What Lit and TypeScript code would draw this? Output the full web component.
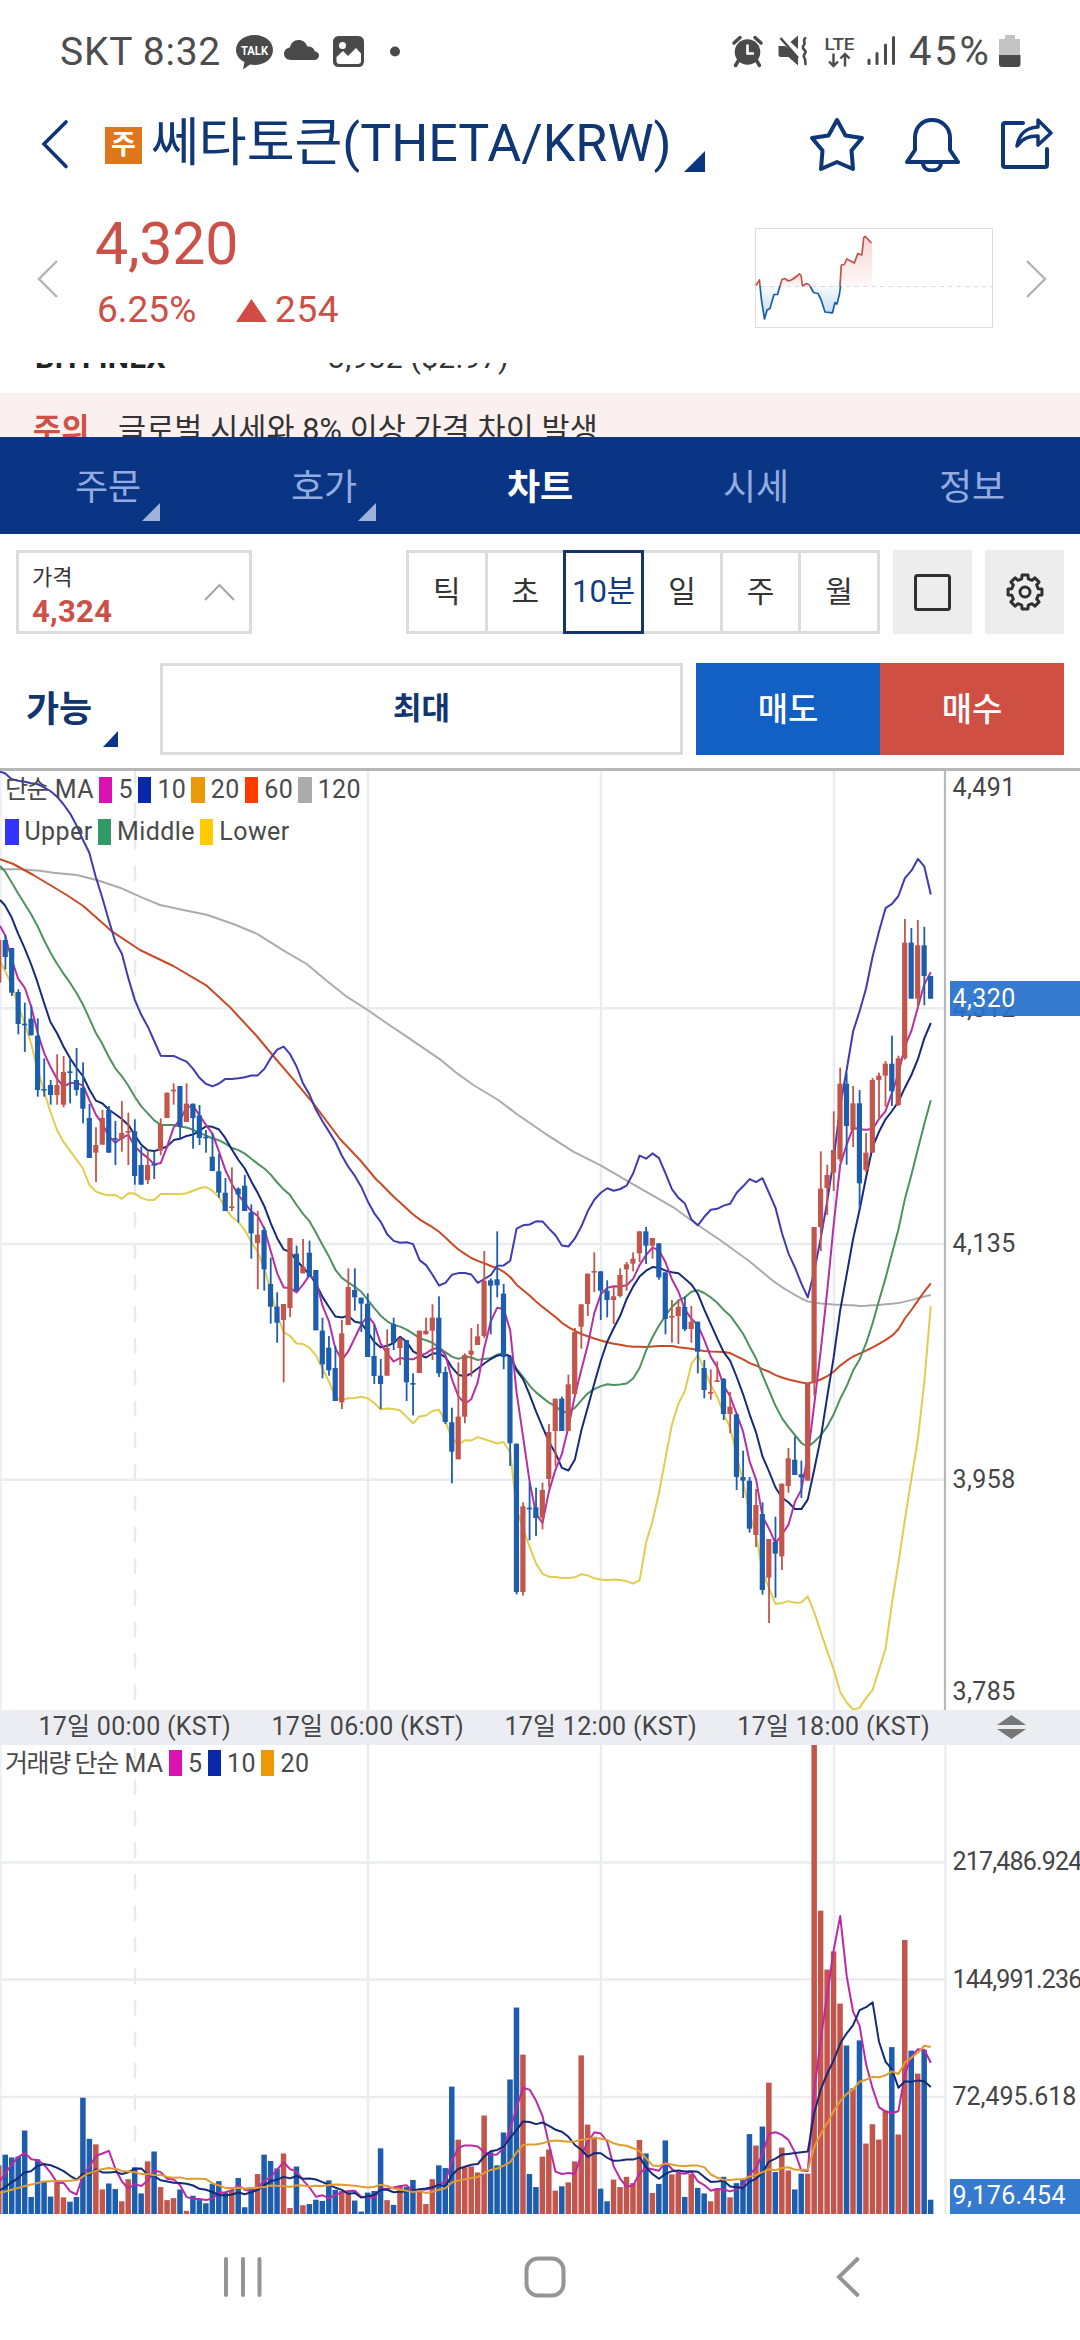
import { LitElement, html, svg, css } from "lit";
import { customElement, property } from "lit/decorators.js";

type Point = [number, number];

/* ---------- candle data: side, body top, body bottom, wick top, wick bottom ---------- */

const UNIT = 3;
const CANDLE_BLOCKS: { offset: number; rows: string }[] = [
  {
    offset: 0,
    rows: `r 540 668 540 668;b 540 591 525 628;b 564 698 564 708;b 696 792 688 823;b 791 796 728 876;b 776 826 737 826;
b 827 990 775 1010;b 987 992 895 1010;b 975 1005 960 1034;r 975 1005 883 1034;r 936 1034 888 1042;b 934 939 895 1030;
b 960 990 864 1007;b 983 1046 907 1090;b 1074 1194 1032 1194;r 1155 1178 1102 1266;r 1074 1154 1050 1154;b 1050 1178 1038 1178;
b 1134 1139 1083 1215;r 1119 1137 1023 1175;r 1113 1118 1058 1215;b 1114 1248 1078 1274;b 1215 1274 1160 1274;r 1215 1260 1172 1272;
b 1212 1217 1175 1257;r 1092 1172 1075 1186;r 998 1074 998 1074;r 989 994 970 1034;b 978 1100 978 1136;r 1031 1086 970 1086;
b 1031 1074 1031 1166;b 1066 1134 1035 1155;b 1130 1135 1110 1178;b 1190 1233 1120 1233;b 1234 1298 1182 1313;b 1298 1353 1254 1353;
r 1339 1344 1222 1353;b 1286 1304 1282 1388;b 1277 1353 1245 1353;b 1357 1420 1333 1496;r 1424 1449 1353 1588;b 1410 1528 1400 1592;
b 1572 1640 1493 1691`,
  },
  {
    offset: 1440,
    rows: `b 200 248 157 308;r 192 240 192 427;r -6 204 -6 231;b 41 152 17 152;r 80 100 -3 100;b 38 110 2 110;
b 90 271 90 271;b 272 373 233 415;b 323 391 288 407;b 384 483 318 483;r 280 487 240 507;r 141 255 85 255;
b 150 172 85 212;b 173 191 173 276;b 191 351 160 351;b 348 408 255 432;b 407 432 357 507;r 324 407 268 407`,
  },
  {
    offset: 1020,
    rows: `b 672 728 653 750;r 716 744 712 795;b 720 847 720 903;b 849 854 820 946;r 692 819 692 819;r 692 703 653 703;
r 653 692 613 780;b 653 820 589 831;b 816 966 800 972;b 967 1055 923 1150;r 950 1078 787 1078;r 765 950 760 970;
r 752 764 684 830;r 709 735 672 735;r 542 708 453 714;b 541 557 535 703;b 538 556 394 592;b 581 771 552 808;
b 771 1030 771 1098;b 1031 1476 1031 1483;r 1219 1476 1207 1487;b 1223 1228 1148 1321;b 1222 1254 1163 1308;r 1170 1253 1148 1288;
r 996 1137 972 1162;r 896 993 896 1098;b 896 993 890 993;r 853 993 824 993;r 696 882 684 882;r 613 680 613 746;
r 521 612 521 648;r 513 518 457 576;b 514 572 514 660;b 572 600 541 652;r 589 600 560 672;r 525 588 505 592;
r 493 508 486 572;r 476 491 457 514;r 394 460 394 486;b 394 437 381 492;r 414 437 414 476;b 430 532 430 539;
b 517 657 517 703;r 648 653 600 728;r 621 648 598 732;b 621 688 589 693;r 665 687 618 728;b 665 755 665 820;
b 804 870 780 895;r 876 881 808 899;r 841 846 784 846`,
  },
  {
    offset: 1440,
    rows: `b 417 522 414 540;r 500 522 456 580;b 523 711 520 750;b 711 722 632 774;b 722 866 711 878;r 795 885 747 921;
b 822 1050 787 1064;r 897 1013 897 1149;b 906 941 830 1073;r 731 949 731 990;r 655 738 624 758;b 659 705 590 705;
b 703 712 662 774;r 429 722 429 722;r -39 430 -39 467`,
  },
  {
    offset: 0,
    rows: `r 1286 1401 1174 1473;r 1245 1284 1214 1365;r 1170 1238 1054 1293;r 971 1198 923 1205;b 971 1098 938 1214;r 1030 1110 978 1161;
b 1030 1270 990 1345;r 1178 1230 1119 1238;r 960 1178 954 1178;r 947 960 938 1077;r 911 947 903 1040;b 911 994 827 1038;
r 895 1035 887 1038;r 548 895 477 899;b 548 716 504 716;r 556 716 480 746;b 556 648 500 736;b 648 716 648 716`,
  },
];

interface Candle {
  up: boolean;
  top: number;
  bottom: number;
  high: number;
  low: number;
}

/* Panel coordinates start at the chart's top rule. */
const PANEL_SHIFT = 11;
const py = (u: number) => u / UNIT - PANEL_SHIFT;

const CANDLES: Candle[] = CANDLE_BLOCKS.flatMap(({ offset, rows }) =>
  rows.split(";").map((row) => {
    const [side, ...v] = row.trim().split(/\s+/);
    const [top, bottom, high, low] = v.map((n) => py(Number(n) + offset));
    return { up: side === "r", top, bottom, high, low };
  })
);

/* ---------- volume data: side + bar top ---------- */

const VOLUMES = `r1125 b1098 b1105 b1103 b1037 b1205 b1110 b1165 b1204 r1162 r1206 b1217 b1205 b954 b1058 r1072 r1186 b1171 b1185 r1216
r1160 b1130 b1196 r1115 b1090 r1180 r1213 r1208 b1186 r1240 b1202 b1213 b1221 b1172 b1165 b1195 r1187 b1157 b1231 b1185
r1147 b1098 b1114 b1133 r1095 r1233 b1128 r1226 b1223 b1212 b1215 b1163 b1187 r1190 r1193 b1214 b1242 b1194 b1190 b1082
r1213 b1225 r1177 b1180 b1162 r1190 r1223 r1160 b1125 b1132 b926 r1060 r1130 r1128 r1143 r999 b1092 b1125 b1042 b908
b726 r845 b1147 b1180 r1103 r1085 r1189 b1178 r1168 r1115 r847 r1022 r1055 b1184 b1216 r1161 r1180 r1154 r1170 r1061
b1095 r1195 b1172 b1062 r1148 r1145 b1205 r1147 b1182 b1196 r1216 r1183 b1154 r1206 b1170 b1162 b1046 r1075 b1027 r916
b1142 r1080 r1138 b1186 b1146 r1146 r62 r481 r630 r584 r716 b822 r930 b809 r1070 r1021 r1060 r986 b826 r1047
r555 b835 r893 b833 b1212`
  .split(/\s+/)
  .map((s) => ({ up: s[0] === "r", y: (Number(s.slice(1)) - 62) / 2.529 }));

const STEP = 6.4713;
const xAt = (slot: number) => 5.4 + STEP * (slot - 1);

const closes = CANDLES.map((c) => (c.up ? c.top : c.bottom));

function average(values: number[], n: number): Point[] {
  const out: Point[] = [];
  for (let i = n - 1; i < values.length; i++) {
    let sum = 0;
    for (let k = i - n + 1; k <= i; k++) sum += values[k];
    out.push([xAt(i), sum / n]);
  }
  return out;
}

function band(values: number[], n: number, k: number): Point[] {
  return average(values, n).map(([x, mean], j) => {
    const win = values.slice(j, j + n);
    const sd = Math.sqrt(win.reduce((a, v) => a + (v - mean) ** 2, 0) / n);
    return [x, mean + k * sd] as Point;
  });
}

const priceLead = (pts: Point[]): Point[] => pts.map(([x, y]) => [x / UNIT, py(y)]);
const volLead = (pts: Point[]): Point[] => pts.map(([x, y]) => [x / 2.904, (y - 62) / 2.529]);
const path = (pts: Point[]) => "M" + pts.map(([x, y]) => `${x.toFixed(1)} ${y.toFixed(1)}`).join("L");

const PRICE_LINES: { color: string; pts: Point[] }[] = [
  {
    color: "#ababab",
    pts: [
      ...priceLead([[0, 328], [60, 328], [120, 332], [160, 338], [230, 345], [290, 360], [360, 383], [420, 410], [480, 435],
        [550, 450], [620, 464], [700, 492], [770, 521], [850, 571], [920, 612], [980, 662], [1040, 710], [1103, 750],
        [1160, 790], [1220, 830], [1320, 898], [1365, 935], [1420, 975], [1495, 1020], [1550, 1062], [1630, 1117], [1720, 1175],
        [1803, 1217], [1900, 1273], [2020, 1342], [2093, 1395], [2160, 1440], [2250, 1505]]),
      ...average(closes, 120),
    ],
  },
  {
    color: "#c94a25",
    pts: [
      ...priceLead([[0, 298], [40, 312], [100, 345], [200, 405], [250, 438], [337, 515], [420, 570], [520, 618], [620, 677],
        [690, 742], [770, 828], [820, 888], [880, 958], [940, 1030], [1020, 1137], [1080, 1200], [1130, 1260]]),
      ...average(closes, 60),
    ],
  },
  {
    color: "#e2cd4e",
    pts: [
      ...priceLead([[0, 605], [14, 630], [34, 673], [54, 735], [74, 790], [93, 850], [112, 925], [132, 992], [151, 1055],
        [171, 1110], [190, 1145], [210, 1172], [229, 1198], [248, 1224], [268, 1274], [287, 1294], [306, 1302], [326, 1306], [346, 1305]]),
      ...band(closes, 20, 2),
    ],
  },
  {
    color: "#3f3bb2",
    pts: [
      ...priceLead([[0, 35], [15, 40], [34, 57], [54, 62], [74, 65], [93, 70], [112, 72], [132, 82], [151, 93], [171, 110],
        [190, 132], [210, 160], [229, 195], [248, 238], [268, 278], [287, 350], [306, 410], [326, 480], [346, 545]]),
      ...band(closes, 20, -2),
    ],
  },
  {
    color: "#4f9160",
    pts: [
      ...priceLead([[0, 318], [14, 333], [34, 365], [54, 400], [74, 432], [93, 462], [112, 497], [132, 540], [151, 577],
        [171, 611], [190, 640], [210, 668], [229, 698], [248, 732], [268, 775], [287, 818], [306, 850], [326, 890], [346, 925]]),
      ...average(closes, 20),
    ],
  },
  {
    color: "#152b78",
    pts: [
      ...priceLead([[0, 420], [14, 435], [34, 470], [54, 520], [74, 565], [93, 612], [112, 665], [132, 728], [151, 785]]),
      ...average(closes, 10),
    ],
  },
  {
    color: "#b530a2",
    pts: [...priceLead([[0, 498], [15, 525], [34, 595], [54, 655]]), ...average(closes, 5)],
  },
];

const vols = VOLUMES.map((v) => v.y);
const VOLUME_LINES: { color: string; pts: Point[] }[] = [
  { color: "#bb2aa4", pts: [...volLead([[0, 1165], [15, 1145], [34, 1123], [52, 1105]]), ...average(vols, 5)] },
  {
    color: "#152b78",
    pts: [
      ...volLead([[0, 1188], [15, 1180], [34, 1168], [52, 1158], [70, 1143], [90, 1140], [108, 1127], [127, 1122], [147, 1125]]),
      ...average(vols, 10),
    ],
  },
  {
    color: "#e09c30",
    pts: [
      ...volLead([[0, 1195], [70, 1178], [127, 1166], [200, 1164], [225, 1162], [250, 1148], [285, 1137], [315, 1132], [340, 1135]]),
      ...average(vols, 20),
    ],
  },
];

const RED = "#c2564d";
const BLUE = "#1d5dae";
const FONT = css`"Roboto", "Noto Sans CJK KR", sans-serif`;

@customElement("status-bar")
export class StatusBar extends LitElement {
  static styles = css`
    :host {
      display: flex;
      justify-content: space-between;
      align-items: center;
      height: 102px;
      padding: 0 59px 0 60px;
      box-sizing: border-box;
      font: 400 39px/1 ${FONT};
      color: #4d4d4d;
    }
    .group {
      display: flex;
      align-items: center;
    }
    .clock {
      letter-spacing: 0.75px;
      width: 175px;
      padding-top: 2px;
      white-space: nowrap;
    }
    .pct {
      font-size: 40px;
      letter-spacing: 2.8px;
      width: 89px;
      padding-top: 2px;
    }
    svg {
      display: block;
    }
    .t {
      font: 700 12.5px ${FONT};
    }
    .lte {
      font: 500 17px ${FONT};
    }
  `;

  render() {
    return html`
      <div class="group">
        <span class="clock">SKT 8:32</span>
        <svg width="170" height="40" viewBox="235 31 170 40" fill="#4a4a4a">
          <path d="M254.5 35c10.500 0 18.500 6.500 18.500 15s-8 15-18.500 15c-1.500 0-3-.1-4.400-.4L243 69.500l1.500-7.500c-5.200-2.600-8.500-7-8.500-12C236 41.500 244 35 254.500 35z" />
          <text class="t" x="254.500" y="54.500" text-anchor="middle" fill="#fff" textLength="27" lengthAdjust="spacingAndGlyphs">TALK</text>
          <path d="M291 60c-4 0-7-2.700-7-6.200 0-3.400 2.500-5.800 6-6.300C290.600 43.200 294 40 298.500 40c4.300 0 7.500 2.600 8.800 6.400 4-.2 6.800 1.800 7.400 4.800 2.600.3 4.300 2 4.300 4.300 0 2.700-2 4.500-4.800 4.500z" />
          <rect x="333" y="36" width="31" height="31" rx="5.500" />
          <circle cx="342.500" cy="45.500" r="3.500" fill="#fff" />
          <path d="M336.500 57l6.500-6 5 5 8-8 5 5.500v7.500a3 3 0 0 1-3 3h-18.500a3 3 0 0 1-3-3z" fill="#fff" />
          <circle cx="395" cy="51.500" r="5" />
        </svg>
      </div>
      <div class="group">
        <svg width="178" height="40" viewBox="731 31 178 40" fill="#4a4a4a">
          <circle cx="747.500" cy="52" r="12.800" />
          <path d="M747.500 44.500v9h6.500" fill="none" stroke="#fff" stroke-width="2.600" />
          <path d="M734 43l6-5.500M761 43l-6-5.500M738.500 60.500l-3 5M756.500 60.500l3 5" stroke="#4a4a4a" stroke-width="3.500" stroke-linecap="round" />
          <path d="M778.500 46h6.500l5 3.500L798 58v7.500L788.500 57H781a2.500 2.500 0 0 1-2.500-2.500zM790.500 42l7.500-6.500V49z" />
          <path d="M780.500 38L798 58" stroke="#4a4a4a" stroke-width="2.600" />
          <path d="M806 37.500c-4.500 3 0 5-1.800 7s-1.800 4 .8 6-3 4.500-.8 7 0 5 1.800 7.500" fill="none" stroke="#4a4a4a" stroke-width="2.600" />
          <text class="lte" x="824.500" y="49.500" textLength="30" lengthAdjust="spacingAndGlyphs">LTE</text>
          <path d="M833.500 53.500v12M829 61.500l4.500 4.500 4.500-4.500M845 66.500v-12M840.500 58.500l4.500-4.500 4.500 4.500" fill="none" stroke="#4a4a4a" stroke-width="2.400" />
          <path d="M869 63.500v-3.500M877 63.500v-10M885.500 63.500v-18.500M893.500 63.500v-26" stroke="#4a4a4a" stroke-width="3" stroke-linecap="round" />
        </svg>
        <span class="pct">45%</span>
        <svg width="23" height="32" viewBox="998 35 23 32">
          <path d="M1005 35h10v4h5v16h-21V39h6z" fill="#c3c3c3" />
          <path d="M999 55h21.500v9a3 3 0 0 1-3 3h-15.500a3 3 0 0 1-3-3z" fill="#4a4a4a" />
        </svg>
      </div>
    `;
  }
}

@customElement("coin-header")
export class CoinHeader extends LitElement {
  static styles = css`
    :host {
      display: flex;
      align-items: center;
      height: 84px;
      padding-left: 38px;
      color: #12376f;
      font-family: ${FONT};
    }
    svg {
      display: block;
      flex: none;
    }
    .badge {
      width: 37px;
      height: 37px;
      margin: 2px 9px 0 36px;
      background: #e0761c;
      color: #fff;
      font: 700 27px/36px ${FONT};
      text-align: center;
    }
    .title {
      font-size: 52px;
      line-height: 86px;
      white-space: nowrap;
      width: 521px;
      color: #0f3675;
    }
    .mark {
      margin: 35px 104px 0 12px;
    }
    .bell {
      margin: 0 39px;
    }
  `;

  render() {
    return html`
      <svg width="31" height="52" viewBox="0 0 31 52"><path d="M28 4L6 26l22 22.500" fill="none" stroke="#0f3778" stroke-width="3.600" stroke-linecap="round" /></svg>
      <span class="badge">주</span>
      <span class="title">쎄타토큰(THETA/KRW)</span>
      <svg class="mark" width="21" height="21"><path d="M21 0v21H0z" fill="#0a3484" /></svg>
      <svg width="56" height="56" viewBox="0 0 56 56" fill="none" stroke="#0f3778" stroke-width="4" stroke-linejoin="round">
        <path d="M28 4l8.500 15.500L53 22 42.500 34.500 44 53l-16-7-16 7 1.500-18.500L3 22l16.500-2.500z" />
      </svg>
      <svg class="bell" width="56" height="56" viewBox="0 0 56 56" fill="none" stroke="#0f3778" stroke-width="4" stroke-linejoin="round">
        <path d="M3 46l8-12V22C11 11 18.500 4 28 4s18 7 18 18v12l8 12z" />
        <path d="M19 47c0 10 18 10 18 0" />
      </svg>
      <svg width="56" height="56" viewBox="0 0 56 56" fill="none" stroke="#0f3778" stroke-width="4" stroke-linejoin="round" stroke-linecap="round">
        <path d="M24 7H6a2 2 0 0 0-2 2v40a2 2 0 0 0 2 2h40a2 2 0 0 0 2-2V33" />
        <path d="M18 30c2-12 8-18 21-19V4l13 13-13 12v-9c-9 0-15 2-21 10z" stroke-width="3.500" />
      </svg>
    `;
  }
}

@customElement("price-summary")
export class PriceSummary extends LitElement {
  static styles = css`
    :host {
      display: flex;
      align-items: flex-start;
      height: 177px;
      color: #cb5148;
      font-family: ${FONT};
    }
    svg {
      display: block;
    }
    .prev {
      margin: 74px 0 0 37px;
    }
    .next {
      margin: 74px 0 0 33px;
    }
    .figures {
      flex: 1;
      padding-left: 37px;
    }
    .price {
      font-size: 59px;
      line-height: 60px;
      margin-top: 28px;
      letter-spacing: -0.2px;
    }
    .row {
      display: flex;
      align-items: center;
      font-size: 37px;
      line-height: 44px;
      margin-top: 14px;
      padding-left: 2px;
    }
    .pct {
      width: 139px;
    }
    .diff {
      margin-left: 8px;
      letter-spacing: 0.6px;
    }
    .mini {
      margin-top: 42px;
    }
  `;

  render() {
    return html`
      <svg class="prev" width="21" height="38" viewBox="0 0 21 38"><path d="M20 1L2 19l18 18" fill="none" stroke="#b3b3b3" stroke-width="2.400" /></svg>
      <div class="figures">
        <div class="price">4,320</div>
        <div class="row">
          <span class="pct">6.25%</span>
          <svg width="31" height="23"><path d="M15.500 0L31 23H0z" fill="#d24c43" /></svg>
          <span class="diff">254</span>
        </div>
      </div>
      <svg class="mini" width="238" height="100" viewBox="0 0 238 100" fill="none" stroke-width="1.700" stroke-linejoin="round">
        <defs>
          <linearGradient id="gr" x1="0" y1="0" x2="0" y2="1"><stop offset="0" stop-color="#e86a62" stop-opacity=".28" /><stop offset="1" stop-color="#e86a62" stop-opacity=".04" /></linearGradient>
          <linearGradient id="gb" x1="0" y1="0" x2="0" y2="1"><stop offset="0" stop-color="#3b8be0" stop-opacity=".04" /><stop offset="1" stop-color="#3b8be0" stop-opacity=".3" /></linearGradient>
        </defs>
        <rect x=".5" y=".5" width="237" height="99" stroke="#dcdcdc" stroke-width="1" />
        <path d="M6 58.500H237" stroke="#d9d9d9" stroke-width="1.200" stroke-dasharray="4.500 4" />
        <path d="M84 58L86 37h3l4-6 7 3 3-8 4 1 3-18 7 6v43z" fill="url(#gr)" />
        <path d="M26 58l2-6 4-1 12-5 3 12z" fill="url(#gr)" />
        <path d="M5 58l5 33 4-9 6-14 4-2 2-8z" fill="url(#gb)" />
        <path d="M55 58l4 7 6 2 5 17 7 2 3-11 3-1 2-16z" fill="url(#gb)" />
        <path d="M1 57.500L4.500 52L5 58" stroke="#bb544c" />
        <path d="M5 58l1.500 14L9.500 91l2.500-9 3-1.500 4-14h3.500L25 58" stroke="#1c5fa8" />
        <path d="M25 58l2-6.500 2.500-1 4 2.500 4-1.500L44.500 46l1.500 1.500L47.500 58l4-2.500 3.500 2" stroke="#bb544c" />
        <path d="M55 58l3.500 6.500 4.500 1 3 6 4 12.500 7.500.8L80 74.500l2 1.500 2.500-10 1-8" stroke="#1c5fa8" />
        <path d="M85 58l1.300-21 3-.5 2.500-5.500 7.500 4 3.500-9.500 4 1.500 2-17.500 1.500-1L116.500 15" stroke="#bb544c" />
      </svg>
      <svg class="next" width="54" height="38" viewBox="0 0 54 38"><path d="M1 1l18 18L1 37" fill="none" stroke="#b3b3b3" stroke-width="2.400" /></svg>
    `;
  }
}

@customElement("notice-strip")
export class NoticeStrip extends LitElement {
  static styles = css`
    :host {
      display: flex;
      flex-direction: column;
      justify-content: flex-end;
      height: 74px;
      overflow: hidden;
      font: 400 30px/19px ${FONT};
      color: #333;
    }
    .market {
      display: flex;
      height: 45px;
      margin-top: -15px;
      padding-left: 35px;
      letter-spacing: 0.3px;
    }
    .name {
      width: 293px;
      font-weight: 700;
      color: #222;
    }
    .alert {
      display: flex;
      height: 44px;
      flex: none;
      background: #faf0ef;
      padding-left: 33px;
      font-size: 30.5px;
      line-height: 73px;
      letter-spacing: 0.1px;
      white-space: nowrap;
      overflow: hidden;
    }
    .tag {
      width: 85px;
      font-weight: 700;
      color: #d05148;
    }
  `;

  render() {
    return html`
      <div class="market"><span class="name">BITFINEX</span><span>3,982 ($2.97)</span></div>
      <div class="alert"><span class="tag">주의</span><span>글로벌 시세와 8% 이상 가격 차이 발생</span></div>
    `;
  }
}

@customElement("section-tabs")
export class SectionTabs extends LitElement {
  static styles = css`
    :host {
      display: grid;
      grid-template-columns: repeat(5, 1fr);
      height: 97px;
      background: #0a3584;
      font: 400 36px/102px ${FONT};
      color: #93acdf;
      text-align: center;
    }
    .tab {
      position: relative;
    }
    .active {
      color: #fff;
      font-weight: 700;
    }
    .corner {
      position: absolute;
      left: 142px;
      top: 66px;
    }
  `;

  render() {
    const tabs = ["주문", "호가", "차트", "시세", "정보"];
    return tabs.map(
      (t, i) => html`<div class="tab ${i === 2 ? "active" : ""}">
        ${t}${i < 2 ? html`<svg class="corner" width="18" height="18"><path d="M18 0v18H0z" fill="#9fb3da" /></svg>` : ""}
      </div>`
    );
  }
}

@customElement("chart-toolbar")
export class ChartToolbar extends LitElement {
  static styles = css`
    :host {
      display: flex;
      flex-direction: column;
      padding: 16px 16px 13px;
      gap: 29px;
      font: 400 30px/1 ${FONT};
      color: #333;
    }
    .row {
      display: flex;
    }
    .price {
      display: flex;
      align-items: center;
      justify-content: space-between;
      box-sizing: border-box;
      width: 236px;
      height: 84px;
      padding: 0 14px 0 13px;
      border: 3px solid #dbdbdb;
      margin-right: 154px;
    }
    .label {
      font-size: 22px;
      line-height: 26px;
      margin-top: 9px;
    }
    .value {
      font-size: 31px;
      line-height: 34px;
      font-weight: 700;
      color: #cb5148;
      letter-spacing: 0.3px;
      margin-top: 4px;
    }
    .periods {
      display: flex;
      width: 474px;
      height: 84px;
    }
    .period {
      flex: 1;
      box-sizing: border-box;
      border: 3px solid #dbdbdb;
      border-right-width: 0;
      line-height: 78px;
      text-align: center;
      white-space: nowrap;
    }
    .period:last-child {
      border-right-width: 3px;
    }
    .on {
      flex: 0 0 81px;
      border: 3px solid #15346a;
      color: #123c80;
      font-size: 31px;
    }
    .on + .period {
      border-left-width: 0;
    }
    .tool {
      display: flex;
      align-items: center;
      justify-content: center;
      width: 79px;
      height: 84px;
      margin-left: 13px;
      background: #ededed;
    }
    .order {
      height: 92px;
      align-items: stretch;
    }
    .avail {
      position: relative;
      width: 144px;
      padding-left: 10px;
      box-sizing: border-box;
      font-size: 36px;
      line-height: 94px;
      font-weight: 700;
      color: #12356f;
    }
    .avail svg {
      position: absolute;
      left: 87px;
      top: 68px;
    }
    .amount {
      box-sizing: border-box;
      width: 523px;
      border: 3px solid #dbdbdb;
      margin-right: 13px;
      font-size: 31px;
      line-height: 86px;
      font-weight: 700;
      color: #12356f;
      text-align: center;
    }
    .side {
      flex: 1;
      background: #1260c4;
      color: #fff;
      font-size: 33px;
      line-height: 94px;
      font-weight: 500;
      text-align: center;
    }
    .buy {
      background: #cf4f44;
    }
  `;

  render() {
    const teeth = Array.from({ length: 8 }, (_, i) => {
      const p = (r: number, deg: number) => {
        const a = ((deg + i * 45 - 90) * Math.PI) / 180;
        return `${(19 + r * Math.cos(a)).toFixed(2)} ${(19 + r * Math.sin(a)).toFixed(2)}`;
      };
      return `${p(13.6, -14)}L${p(17.2, -10)}L${p(17.2, 10)}L${p(13.6, 14)}`;
    }).join("L");
    return html`
      <div class="row">
        <div class="price">
          <div>
            <div class="label">가격</div>
            <div class="value">4,324</div>
          </div>
          <svg width="31" height="18" viewBox="0 0 31 18"><path d="M1 17L15.500 2 30 17" fill="none" stroke="#a6a6a6" stroke-width="2" /></svg>
        </div>
        <div class="periods">
          ${["틱", "초", "10분", "일", "주", "월"].map((p) => html`<div class="period ${p === "10분" ? "on" : ""}">${p}</div>`)}
        </div>
        <div class="tool">
          <svg width="37" height="37"><rect x="1.500" y="1.500" width="34" height="34" rx="2" fill="none" stroke="#303030" stroke-width="3" /></svg>
        </div>
        <div class="tool">
          <svg width="38" height="38" fill="none" stroke="#303030" stroke-width="3" stroke-linejoin="round">
            <path d="M${teeth}Z" />
            <circle cx="19" cy="19" r="5" />
          </svg>
        </div>
      </div>
      <div class="row order">
        <div class="avail">가능<svg width="15" height="16"><path d="M15 0v16H0z" fill="#0a3484" /></svg></div>
        <div class="amount">최대</div>
        <div class="side">매도</div>
        <div class="side buy">매수</div>
      </div>
    `;
  }
}

@customElement("chart-legend")
export class ChartLegend extends LitElement {
  @property() heading = "";
  @property({ attribute: false }) items: [string, string][] = [];

  static styles = css`
    :host {
      display: flex;
      align-items: center;
      height: 27px;
      font: 400 25px/27px ${FONT};
      color: #4a4a4a;
      letter-spacing: 0.4px;
      white-space: pre;
    }
    .heading {
      letter-spacing: -1.4px;
    }
    .swatch {
      width: 13.5px;
      height: 26px;
      margin: 0 6px 0 5px;
    }
  `;

  render() {
    return html`${this.heading ? html`<span class="heading">${this.heading}</span><span> MA</span>` : ""}
    ${this.items.map(([name, color]) => html`<span class="swatch" style="background:${color}"></span><span>${name}</span>`)}`;
  }
}

@customElement("trade-chart")
export class TradeChart extends LitElement {
  static styles = css`
    :host {
      display: block;
      font: 400 25px/30px ${FONT};
      color: #454545;
    }
    .panel {
      position: relative;
      display: grid;
      grid-template-columns: 947px 1fr;
    }
    .upper {
      height: 939px;
      border-top: 3px solid #b7b7b7;
    }
    .lower {
      height: 469px;
    }
    .plot {
      display: block;
    }
    .scale {
      position: relative;
    }
    .mark {
      position: absolute;
      left: 5.5px;
      transform: translateY(-50%);
      white-space: nowrap;
      letter-spacing: 0.4px;
    }
    .lower .mark {
      letter-spacing: 0;
    }
    .lower .long {
      letter-spacing: -0.82px;
    }
    .current {
      position: absolute;
      left: 3px;
      right: 0;
      height: 34.5px;
      line-height: 36px;
      padding-left: 2.5px;
      background: rgba(40, 113, 204, 0.93);
      color: #fff;
      letter-spacing: 0.4px;
    }
    .lower .current {
      bottom: 0;
      line-height: 34px;
    }
    .overlay {
      position: absolute;
      left: 5px;
      top: 5px;
      display: flex;
      flex-direction: column;
      gap: 15px;
    }
    .bands {
      margin-left: -5px;
    }
    .times {
      display: grid;
      grid-template-columns: 18.3px repeat(4, 232.97px) 1fr;
      align-items: center;
      height: 34.5px;
      background: #ecedf3;
      text-align: center;
      white-space: nowrap;
      letter-spacing: 0.28px;
    }
    .times svg {
      margin-left: 47px;
      display: block;
    }
  `;

  private frame(h: number, rows: number[], dashStart: number) {
    return svg`
      <path d="M1 0V${h}" stroke="#e9edf2" stroke-width="1.500" />
      <path d="M368 0V${h}M601 0V${h}M834 0V${h}" stroke="#ebecf0" stroke-width="2.400" />
      <path d="M135 ${dashStart}V${h}" stroke="#e8eaed" stroke-width="2.400" stroke-dasharray="15.500 16" />
      ${rows.map((y) => svg`<path d="M0 ${y}H945" stroke="#ebecf0" stroke-width="2.400" />`)}
    `;
  }

  private lines(list: { color: string; pts: Point[] }[]) {
    return list.map((l) => svg`<path d=${path(l.pts)} fill="none" stroke=${l.color} stroke-width="2" stroke-linejoin="round" />`);
  }

  render() {
    return html`
      <div class="panel upper">
        <svg class="plot" width="947" height="939" viewBox="0 0 947 939">
          ${this.frame(939, [237.3, 473, 708.7], 0)}
          ${this.lines(PRICE_LINES)}
          ${CANDLES.map((c, i) => {
            const x = xAt(i);
            const color = c.up ? RED : BLUE;
            return svg`
              <rect x=${x - 0.9} y=${c.high} width="1.800" height=${c.low - c.high} fill=${color} />
              <rect x=${x - 2.8} y=${c.top} width="5.200" height=${c.bottom - c.top} fill=${color} />`;
          })}
          <path d="M945 0V939" stroke="#b9b9b9" stroke-width="2.200" />
        </svg>
        <div class="scale">
          <span class="mark" style="top:17px">4,491</span>
          <span class="mark" style="top:238px">4,312</span>
          <span class="mark" style="top:473px">4,135</span>
          <span class="mark" style="top:709px">3,958</span>
          <span class="mark" style="top:921px">3,785</span>
          <span class="current" style="top:210px">4,320</span>
        </div>
        <div class="overlay">
          <chart-legend
            .heading=${"단순"}
            .items=${[["5", "#dc12b0"], ["10", "#0a26aa"], ["20", "#e99a06"], ["60", "#ff3b00"], ["120", "#ababab"]]}
          ></chart-legend>
          <chart-legend class="bands" .items=${[["Upper", "#3333ff"], ["Middle", "#339966"], ["Lower", "#ffcc00"]]}></chart-legend>
        </div>
      </div>
      <div class="times">
        <span></span>
        <span>17일 00:00 (KST)</span><span>17일 06:00 (KST)</span><span>17일 12:00 (KST)</span><span>17일 18:00 (KST)</span>
        <svg width="29" height="24"><path d="M14.500 0L29 10H0zM14.500 24L29 14H0z" fill="#777" /></svg>
      </div>
      <div class="panel lower">
        <svg class="plot" width="947" height="469" viewBox="0 0 947 469">
          ${this.frame(469, [117.5, 234.5, 352], 3)}
          <path d="M945.500 0V469" stroke="#eaecf1" stroke-width="2.400" />
          ${VOLUMES.map((v, i) => svg`<rect x=${xAt(i) - 2.9} y=${v.y} width="5.500" height=${469 - v.y} fill=${v.up ? RED : BLUE} />`)}
          ${this.lines(VOLUME_LINES)}
        </svg>
        <div class="scale">
          <span class="mark long" style="top:117px">217,486.924</span>
          <span class="mark long" style="top:235px">144,991.236</span>
          <span class="mark" style="top:352px">72,495.618</span>
          <span class="current">9,176.454</span>
        </div>
        <div class="overlay">
          <chart-legend .heading=${"거래량 단순"} .items=${[["5", "#dc12b0"], ["10", "#0a26aa"], ["20", "#e99a06"]]}></chart-legend>
        </div>
      </div>
    `;
  }
}

@customElement("app-root")
export class AppRoot extends LitElement {
  static styles = css`
    :host {
      display: flex;
      flex-direction: column;
      width: 1080px;
      height: 2340px;
      background: #fff;
      overflow: hidden;
    }
    .nav {
      display: flex;
      align-items: center;
      flex: 1;
      padding-left: 224px;
    }
    .home {
      margin: 0 270px 0 262px;
    }
  `;

  render() {
    return html`
      <status-bar></status-bar>
      <coin-header></coin-header>
      <price-summary></price-summary>
      <notice-strip></notice-strip>
      <section-tabs></section-tabs>
      <chart-toolbar></chart-toolbar>
      <trade-chart></trade-chart>
      <div class="nav">
        <svg width="38" height="42"><path d="M2 3v36M19 3v36M35.500 3v36" stroke="#959595" stroke-width="4" stroke-linecap="round" /></svg>
        <svg class="home" width="42" height="42"><rect x="2.500" y="2.500" width="37" height="37" rx="11.500" fill="none" stroke="#959595" stroke-width="4" /></svg>
        <svg width="24" height="42"><path d="M22.500 2L3 21l19.500 19" fill="none" stroke="#959595" stroke-width="4" /></svg>
      </div>
    `;
  }
}
